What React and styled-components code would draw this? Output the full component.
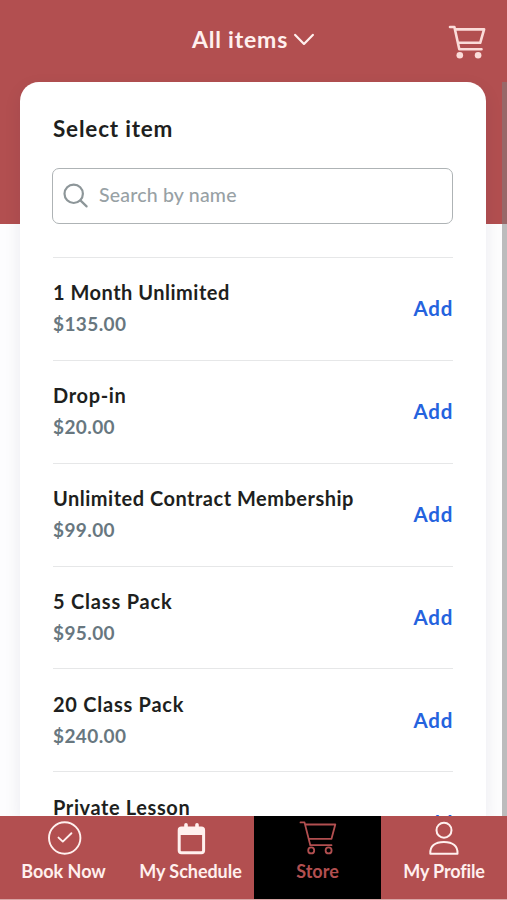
import React, { useState } from 'react';
import styled, { createGlobalStyle } from 'styled-components';

//Styled
const GlobalStyle = createGlobalStyle`
    * { box-sizing: border-box; }
    body {
        margin:0;
        overflow:hidden;
        background-color:#fff;
        font-family: Lato, sans-serif;
    }
    `;

const Screen = styled.div`
    position:relative;
    display:flex;
    flex-direction:column;
    width:507px;
    height:900px;
    overflow:hidden;
    background: linear-gradient(#b24f50 224px, #fdfdfe 224px);
    `;

const Header = styled.header`
    display:grid;
    grid-template-columns: 1fr auto 1fr;
    align-items:center;
    flex:none;
    height:82px;
    padding: 0 21px 0 20px;
    `;

const Filter = styled.button`
    grid-column:2;
    display:flex;
    align-items:center;
    gap:6px;
    padding: 0 0 4px;
    border:0;
    background:none;
    color:#fff0ee;
    font-family:inherit;
    font-size:23px;
    font-weight:700;
    line-height:30px;
    letter-spacing:.8px;
    `;

const CartButton = styled.button`
    justify-self:end;
    height:36px;
    padding:0;
    border:0;
    background:none;
    color:#fbdcd9;
    `;

const Card = styled.main`
    flex:1;
    min-height:0;
    width:466px;
    margin-left:20px;
    padding: 32px 33px 0;
    overflow:hidden;
    border-radius: 19px 19px 0 0;
    background-color:#fff;
    box-shadow: 0 6px 18px rgba(30, 30, 70, .08);
    `;

const Title = styled.h1`
    height:30px;
    margin:0;
    color:#1e1f20;
    font-size:22.5px;
    font-weight:700;
    line-height:30px;
    letter-spacing:.8px;
    `;

const SearchBox = styled.label`
    display:flex;
    align-items:center;
    gap:10px;
    width:401px;
    height:56px;
    margin: 24px 0 0 -1px;
    padding-left:10px;
    border:1.5px solid #aeb3b5;
    border-radius:7px;
    color:#8d9699;
    `;

const SearchInput = styled.input`
    flex:1;
    min-width:0;
    padding: 0 0 3px;
    border:0;
    outline:0;
    background:none;
    font-family:inherit;
    font-size:19.5px;
    font-weight:500;
    letter-spacing:.2px;

    &::placeholder { color:#98a1a5; opacity:1; }
    `;

const ItemList = styled.ul`
    width:400px;
    margin: 33px 0 0;
    padding:0;
    list-style:none;
    `;

const ItemRow = styled.li`
    display:flex;
    align-items:center;
    justify-content:space-between;
    height:102.85px;
    padding-bottom:1.2px;
    border-top:1.5px solid #e6e7e8;
    `;

const ItemName = styled.h2`
    margin:0;
    color:#1e1f20;
    font-size:20px;
    font-weight:700;
    line-height:32px;
    letter-spacing:${props => props.$spacing || .55}px;
    `;

const Price = styled.p`
    margin:0;
    color:#68777f;
    font-size:19px;
    font-weight:700;
    line-height:32px;
    letter-spacing:.4px;
    `;

const AddButton = styled.button`
    padding:0;
    border:0;
    background:none;
    color:#2563de;
    font-family:inherit;
    font-size:20.5px;
    font-weight:700;
    line-height:32px;
    letter-spacing:.7px;
    `;

const ScrollThumb = styled.div`
    position:absolute;
    top:82px;
    right:0;
    bottom:84px;
    width:5px;
    background-color:rgba(128, 128, 128, .52);
    `;

const TabBar = styled.nav`
    display:grid;
    grid-template-columns: 127px 127px 127px 126px;
    flex:none;
    height:84px;
    border-bottom:1px solid #d9a5a5;
    background-color:#b24f50;
    `;

const Tab = styled.a`
    display:flex;
    flex-direction:column;
    align-items:center;
    gap:2px;
    padding-top:4px;
    background-color:${props => props.$active ? '#000' : 'transparent'};
    color:${props => props.$active ? '#b24f50' : '#fff0ee'};
    font-size:18px;
    font-weight:700;
    line-height:26px;
    letter-spacing:${props => props.$spacing || 0}px;
    white-space:nowrap;
    `;

const Icon = styled.svg`
    display:block;
    flex:none;
    fill:none;
    stroke:currentColor;
    stroke-width:${props => props.$stroke || 2};
    stroke-linecap:round;
    stroke-linejoin:round;
    `;

function ChevronIcon(){
    return(
        <Icon width="20" height="14" viewBox="0 0 20 14" $stroke={2.2}>
            <path d="M1.2 2.9L10 11.9L18.8 2.9"/>
        </Icon>
    )
}

function HeaderCartIcon(){
    return(
        <Icon width="40" height="36" viewBox="0 0 40 36" $stroke={2.6}>
            <path d="M4 4H8.4L13.3 26.2H35.5M9.1 6.4H38.1L34.2 19.8H11.9"/>
            <circle cx="13.8" cy="32.2" r="3.3" fill="currentColor" stroke="none"/>
            <circle cx="32.1" cy="32.2" r="3.3" fill="currentColor" stroke="none"/>
        </Icon>
    )
}

function SearchIcon(){
    return(
        <Icon width="26" height="26" viewBox="0 0 26 26" $stroke={2.2}>
            <circle cx="10.7" cy="10.8" r="9.2"/>
            <path d="M17.4 17.4L23.6 23.4"/>
        </Icon>
    )
}

function CheckIcon(){
    return(
        <Icon width="36" height="36" viewBox="0 0 36 36" $stroke={1.9}>
            <circle cx="18.7" cy="18" r="15.7"/>
            <path d="M12.5 17.6L16.8 21.6L25.4 13.2"/>
        </Icon>
    )
}

function CalendarIcon(){
    return(
        <Icon width="36" height="36" viewBox="0 0 36 36" $stroke={3}>
            <rect x="6.2" y="8" width="24.4" height="24.8" rx="2.2"/>
            <path d="M6.2 8H30.6V15H6.2Z" fill="currentColor" stroke="none"/>
            <path d="M13 4.7V8M24 4.7V8" strokeWidth="3.6"/>
        </Icon>
    )
}

function StoreIcon(){
    return(
        <Icon width="40" height="36" viewBox="0 0 40 36" $stroke={1.8}>
            <path d="M2.5 2.4H6.5L12.3 25.2H33.5M7.3 4.5H37.3L33.5 18.8H10.9"/>
            <circle cx="13.2" cy="30.4" r="3"/>
            <circle cx="30.6" cy="30.4" r="3"/>
        </Icon>
    )
}

function ProfileIcon(){
    return(
        <Icon width="36" height="36" viewBox="0 0 36 36" $stroke={2}>
            <circle cx="18" cy="10.2" r="7.5"/>
            <path d="M4.3 33.7C3.9 26.4 8.7 22 17.9 22S31.9 26.4 31.5 33.7Z"/>
        </Icon>
    )
}

const items = [
    {name:'1 Month Unlimited', price:'$135.00', spacing:.5},
    {name:'Drop-in', price:'$20.00', spacing:.65},
    {name:'Unlimited Contract Membership', price:'$99.00', spacing:.5},
    {name:'5 Class Pack', price:'$95.00', spacing:.8},
    {name:'20 Class Pack', price:'$240.00', spacing:.75},
    {name:'Private Lesson', price:'$75.00', spacing:.6},
];

const tabs = [
    {label:'Book Now', icon:CheckIcon},
    {label:'My Schedule', icon:CalendarIcon, spacing:-.05},
    {label:'Store', icon:StoreIcon},
    {label:'My Profile', icon:ProfileIcon, spacing:-.15},
];

export default function App(){

    const [search, setSearch] = useState('');
    const [active, setActive] = useState('Store');

    const shown = items.filter(item => item.name.toLowerCase().includes(search.toLowerCase()));

return(
    <Screen>
        <GlobalStyle/>
        <Header>
            <Filter>All items<ChevronIcon/></Filter>
            <CartButton aria-label="Cart"><HeaderCartIcon/></CartButton>
        </Header>
        <Card>
            <Title>Select item</Title>
            <SearchBox>
                <SearchIcon/>
                <SearchInput placeholder="Search by name" value={search} onChange={e => setSearch(e.target.value)}/>
            </SearchBox>
            <ItemList>
                {shown.map(item => (
                    <ItemRow key={item.name}>
                        <div>
                            <ItemName $spacing={item.spacing}>{item.name}</ItemName>
                            <Price>{item.price}</Price>
                        </div>
                        <AddButton>Add</AddButton>
                    </ItemRow>
                ))}
            </ItemList>
        </Card>
        <TabBar>
            {tabs.map(({label, icon:TabIcon, spacing}) => (
                <Tab key={label} $active={label === active} $spacing={spacing} onClick={() => setActive(label)}>
                    <TabIcon/>
                    {label}
                </Tab>
            ))}
        </TabBar>
        <ScrollThumb/>
    </Screen>
)
}
